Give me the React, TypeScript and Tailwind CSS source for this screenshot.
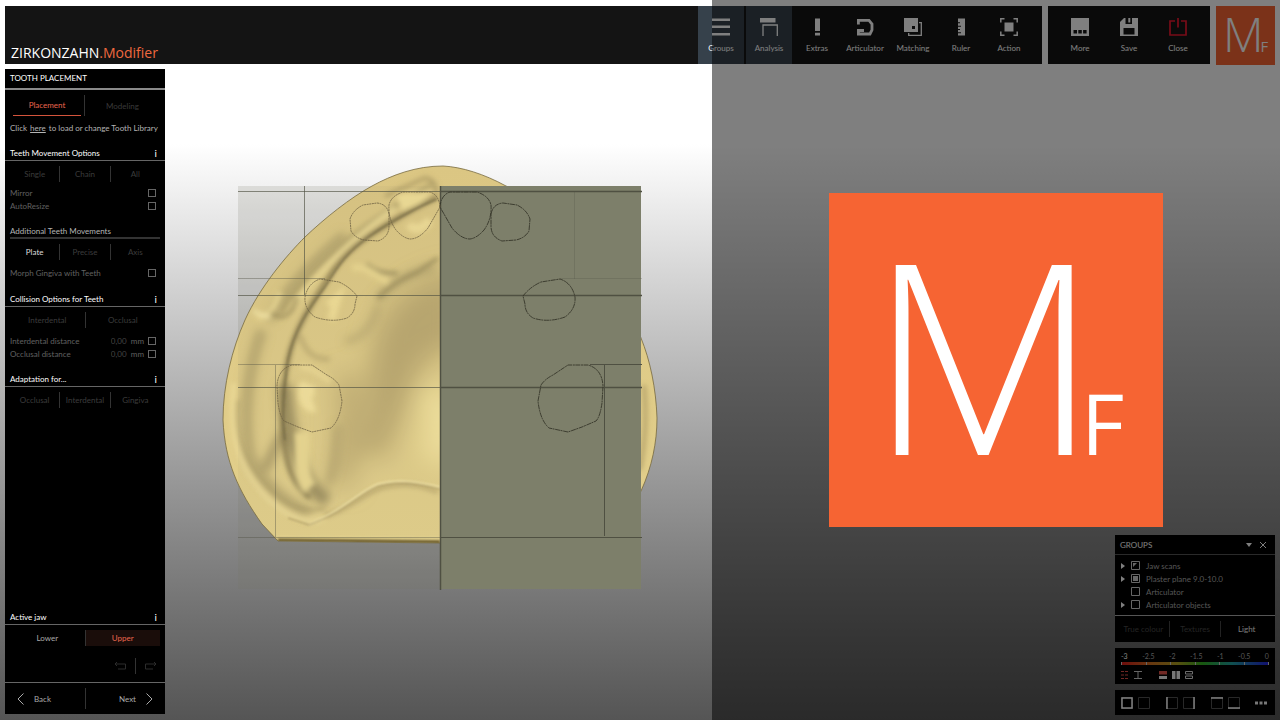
import type { ReactNode } from "react";

function BrandMark({ className }: { className: string }) {
  return (
    <svg viewBox="0 0 334 334" className={`overflow-visible ${className}`} role="img" aria-label="Modifier">
      <rect width="334" height="334" fill="#f66433" />
      <text x="40" y="262" fill="#fff" fontFamily="Open Sans" fontWeight="300" fontSize="266">
        M<tspan x="252" fontWeight="400" fontSize="84">F</tspan>
      </text>
    </svg>
  );
}

function Icon({ children, className = "size-[18px]" }: { children: ReactNode; className?: string }) {
  return (
    <svg viewBox="0 0 18 18" className={className} fill="none" stroke="none" aria-hidden="true">
      {children}
    </svg>
  );
}

const mainTools = [
  { label: "Groups", active: true, icon: <path fill="currentColor" d="M0 .5h18v2.500H0zM0 7.500h18V10H0zM0 15h18v2.500H0z" /> },
  {
    label: "Analysis",
    active: true,
    icon: (
      <>
        <path fill="currentColor" d="M0 0h15.500v4.500H0z" />
        <path stroke="currentColor" strokeWidth="1.300" d="M3 18V7h14.300v11" />
      </>
    ),
  },
  { label: "Extras", active: false, icon: <path fill="currentColor" d="M7 .5h5V13H7zM7 14.800h5v2.700H7z" /> },
  { label: "Articulator", active: false, icon: <path stroke="currentColor" strokeWidth="2.800" d="M2.400 6.500V2.400H13L16 6v6l-2 4H2.400v-3.500H8" /> },
  {
    label: "Matching",
    active: false,
    icon: (
      <>
        <path fill="currentColor" fillRule="evenodd" d="M0 0h14v14H0zM8 8v3h3V8z" />
        <path stroke="currentColor" strokeWidth="1.300" d="M15 4.700h2.300v12.600H4.700V15" />
      </>
    ),
  },
  { label: "Ruler", active: false, icon: <path fill="currentColor" d="M6 .5h7v17H6v-2.200h3v-1H6V12h2v-1H6V8.700h3v-1H6V5.300h2v-1H6z" /> },
  {
    label: "Action",
    active: false,
    icon: (
      <>
        <path fill="currentColor" d="M4.500 4.500h9v9h-9z" />
        <path stroke="currentColor" strokeWidth="1.500" d="M.8 4.500V.8h3.700M13.500.8h3.700v3.700M17.200 13.500v3.700h-3.700M4.500 17.200H.8v-3.700" />
      </>
    ),
  },
];

const fileTools = [
  { label: "More", tone: "text-white", icon: <path fill="currentColor" fillRule="evenodd" d="M0 0h18v18H0zM2.500 12v3.500H6V12zM7.300 12v3.500h3.500V12zM12.100 12v3.500h3.500V12z" /> },
  { label: "Save", tone: "text-white", icon: <path fill="currentColor" fillRule="evenodd" d="M4 0h14v18H0V4zM5.500 0v6H12V0zM3.500 10v6.500h11V10zM8.300 0h2v4.500h-2z" /> },
  { label: "Close", tone: "text-[#f01830]", icon: <path stroke="currentColor" strokeWidth="1.700" d="M6 3H1v14h16V3h-5M9 0v9.500" /> },
];

function ToolButton({ label, tone, active, icon }: { label: string; tone: string; active: boolean; icon: ReactNode }) {
  return (
    <button className={`flex w-[46px] flex-col items-center gap-1.5 pt-3 text-[8px] leading-3 ${active ? "bg-[#36414b]" : ""}`}>
      <span className={tone}><Icon>{icon}</Icon></span>
      <span className="text-white">{label}</span>
    </button>
  );
}

function Heading({ children }: { children: ReactNode }) {
  return (
    <h2 className="flex h-4 items-start justify-between border-b border-[#666] pr-2 pl-[5px] leading-4 text-white">
      {children}
      <button className="text-[10px] leading-[17px]" aria-label={`About ${children}`}>i</button>
    </h2>
  );
}

function Segments({ items, selected }: { items: string[]; selected?: string }) {
  return (
    <div className="mx-[5px] mt-[5px] flex h-4 divide-x divide-[#333]">
      {items.map((item) => (
        <button key={item} className={`flex-1 ${item === selected ? "text-[#ddd]" : "text-[#3c3c3c]"}`}>{item}</button>
      ))}
    </div>
  );
}

function CheckRow({ label, value }: { label: string; value?: string }) {
  return (
    <div className="flex h-[13px] items-center pr-[9px] pl-[5px] text-[#606060]">
      <label className="flex flex-1 items-center justify-between">
        {label}
        {value && <input type="text" defaultValue={value} className="w-5 bg-transparent text-[8px] text-[#444]" />}
      </label>
      {value && <span className="mr-1">mm</span>}
      <input type="checkbox" aria-label={label} className="size-2 appearance-none border border-[#666]" />
    </div>
  );
}

function Sidebar() {
  return (
    <aside className="mb-px flex w-40 shrink-0 flex-col bg-black">
      <h1 className="h-[21px] border-b-2 border-[#8a8a8a] pl-[5px] leading-[18px] text-white">TOOTH PLACEMENT</h1>
      <div className="mx-[5px] mt-[5px] flex h-[21px] divide-x divide-[#333]">
        <div className="flex w-1/2 px-[3px]">
          <button className="flex-1 border-b border-[#d4543c] text-[#e8664e]">Placement</button>
        </div>
        <button className="w-1/2 text-[#3a3a3a]">Modeling</button>
      </div>
      <p className="mt-1.5 mb-[11px] pl-[5px] whitespace-nowrap text-[#b4b4b4]">
        Click <a href="#library" className="mx-px underline">here</a> to load or change Tooth Library
      </p>
      <Heading>Teeth Movement Options</Heading>
      <Segments items={["Single", "Chain", "All"]} />
      <div className="mt-1 mb-[11px]">
        <CheckRow label="Mirror" />
        <CheckRow label="AutoResize" />
      </div>
      <h3 className="mx-[5px] h-4 border-b-2 border-[#333] leading-4 text-[#b4b4b4]">Additional Teeth Movements</h3>
      <Segments items={["Plate", "Precise", "Axis"]} selected="Plate" />
      <div className="mt-1.5 mb-3">
        <CheckRow label="Morph Gingiva with Teeth" />
      </div>
      <Heading>Collision Options for Teeth</Heading>
      <Segments items={["Interdental", "Occlusal"]} />
      <div className="mt-1.5 mb-[11px]">
        <CheckRow label="Interdental distance" value="0,00" />
        <CheckRow label="Occlusal distance" value="0,00" />
      </div>
      <Heading>Adaptation for...</Heading>
      <Segments items={["Occlusal", "Interdental", "Gingiva"]} />
      <div className="flex-1" />
      <Heading>Active jaw</Heading>
      <div className="mx-[5px] mt-[5px] flex h-4 divide-x divide-[#333]">
        <button className="flex-1 text-[#aaa]">Lower</button>
        <button className="flex-1 bg-[#1a0d0a] text-[#e8664e]">Upper</button>
      </div>
      <div className="mt-3 mb-2 flex h-4 items-center justify-end divide-x divide-[#333] pr-2 text-[#2c2c2c]">
        <button className="flex h-4 items-center pr-[9px]" aria-label="Undo">
          <svg viewBox="0 0 12 8" className="h-2 w-3" fill="none" stroke="currentColor" aria-hidden="true"><path d="M3 0 1 2l2 2M1 2h10.500v5H4" /></svg>
        </button>
        <button className="flex h-4 items-center pl-[9px]" aria-label="Redo">
          <svg viewBox="0 0 12 8" className="h-2 w-3" fill="none" stroke="currentColor" aria-hidden="true"><path d="m9 0 2 2-2 2M11 2H.5v5H8" /></svg>
        </button>
      </div>
      <div className="flex h-8 border-t border-[#666] py-[5px] text-[#aaa]">
        <button className="flex flex-1 items-center gap-2.5 border-r border-[#333] pl-3">
          <svg viewBox="0 0 7 12" className="h-3 w-[7px]" fill="none" stroke="currentColor" aria-hidden="true"><path d="M6.500.5 1 6l5.500 5.500" /></svg>
          Back
        </button>
        <button className="flex flex-1 items-center justify-end gap-2.5 pr-3">
          Next
          <svg viewBox="0 0 7 12" className="h-3 w-[7px]" fill="none" stroke="currentColor" aria-hidden="true"><path d="M.5.5 6 6 .5 11.500" /></svg>
        </button>
      </div>
    </aside>
  );
}

const jawOutline =
  "M443 166C416 166 392 175 372 186C350 198 325 218 305 237C286 256 260 287 245 320C232 349 223 385 223 420C225 462 238 490 262 524L278 541L440 543H602C622 520 634 505 641 491C652 467 657 442 657 418C656 388 650 360 641 338C620 270 560 206 506 186C484 174 462 167 443 166Z";

function ToothOutlines() {
  return (
    <>
      <path d="M440 207Q441 195 450 192L477 192Q489 196 491 205Q492 219 484 230Q477 238 470 239Q461 239 452 228Z" />
      <path d="M491 214Q493 204 503 203L517 205Q527 210 530 219L529 231Q525 238 516 240L502 241Q491 237 491 226Z" />
      <path d="M523 296Q530 287 541 282L560 279Q572 283 575 297Q576 309 565 317Q548 323 533 318Q525 313 525 304Z" />
      <path d="M538 401L541 385Q545 379 553 375L568 365H588Q602 369 603 386L602 403Q600 417 596 421L582 427L568 432L549 428Q540 420 538 401Z" />
    </>
  );
}

function JawView() {
  return (
    <svg viewBox="220 160 440 432" className="h-[432px] w-[440px] shrink-0" fill="none" role="img" aria-label="Jaw scan with tooth placement plate">
      <defs>
        <clipPath id="jaw"><path d={jawOutline} /></clipPath>
        <linearGradient id="plaster" x1="0" y1="0" x2="0" y2="1">
          <stop offset="0" stopColor="#dbc683" />
          <stop offset="1" stopColor="#e3d08c" />
        </linearGradient>
        <filter id="wide" x="-60%" y="-40%" width="220%" height="180%"><feGaussianBlur stdDeviation="13" /></filter>
        <filter id="soft" x="-30%" y="-30%" width="160%" height="160%"><feGaussianBlur stdDeviation="5" /></filter>
        <filter id="fine" x="-30%" y="-30%" width="160%" height="160%"><feGaussianBlur stdDeviation="2.500" /></filter>
        <filter id="edge" x="-30%" y="-30%" width="160%" height="160%"><feGaussianBlur stdDeviation=".8" /></filter>
      </defs>
      <path d="M238 186H440V589H238Z" fill="#7d7f6a" opacity=".13" />
      <path d={jawOutline} fill="url(#plaster)" />
      <g clipPath="url(#jaw)">
        <g filter="url(#wide)">
          <path d="M460 270C410 280 385 305 375 340C366 380 370 420 360 450L385 460C395 430 400 420 415 380C425 355 440 350 460 345Z" fill="#bba870" />
          <path d="M348 375C350 420 352 450 340 485" stroke="#b9a66e" strokeWidth="18" />
          <path d="M435 390C445 420 445 440 435 460" stroke="#f6e6a0" strokeWidth="30" />
        </g>
        <g filter="url(#soft)">
          <path d="M338 425C336 450 336 465 328 485" stroke="#a89866" strokeWidth="8" opacity=".6" />
          <path d="M378 305C374 325 362 338 345 342" stroke="#ab9b68" strokeWidth="6" opacity=".7" />
          <path d="M435 268C410 272 388 285 378 300" stroke="#a99a68" strokeWidth="9" opacity=".6" />
          <path d="M345 235C315 260 285 290 270 320" stroke="#b0a06a" strokeWidth="9" />
          <path d="M262 330C247 370 243 420 250 455C262 485 290 505 310 513" stroke="#b8a76f" strokeWidth="11" />
          <path d="M328 500C300 487 288 440 285 385" stroke="#9d8f60" strokeWidth="14" />
          <path d="M285 430C276 447 268 458 266 470" stroke="#a99966" strokeWidth="9" />
        </g>
        <g filter="url(#fine)">
          <path d="M437 197C418 206 390 222 370 235C345 252 336 265 325 283C310 306 294 331 288 360C282 390 281 420 285 448C288 475 300 490 310 498" stroke="#84764b" strokeWidth="4" />
          <path d="M432 184C400 202 364 224 338 248C306 276 290 294 281 313" stroke="#a99a64" strokeWidth="4" opacity=".8" />
          <path d="M395 208C360 232 320 268 294 307" stroke="#eddb96" strokeWidth="4" />
          <path d="M280 292C274 310 266 319 257 316" stroke="#efdc96" strokeWidth="6" opacity=".8" />
          <path d="M271 313L280 317C290 318 295 304 298 298" stroke="#9f905d" strokeWidth="3" />
          <path d="M253 311L270 318" stroke="#f6e8aa" strokeWidth="3" />
          <path d="M400 197L425 195Q420 203 404 207Z" fill="#efdd96" stroke="#efdd96" strokeWidth="6" />
          <path d="M385 196L425 178Q437 180 436 194" stroke="#b3a169" strokeWidth="4" />
          <path d="M409 224C413 230 420 232 430 220" stroke="#eedb96" strokeWidth="9" />
          <path d="M366 264C376 273 388 274 398 273" stroke="#a39462" strokeWidth="4" />
          <path d="M352 268C366 265 370 273 388 282" stroke="#e9d68f" strokeWidth="7" />
          <path d="M378 298C392 284 404 278 418 272L438 258" stroke="#988a59" strokeWidth="3" />
          <path d="M328 305L338 297L331 320" stroke="#efdc95" strokeWidth="8" />
          <path d="M300 335C305 353 315 360 330 359" stroke="#c6b377" strokeWidth="6" />
          <path d="M300 367C310 367 322 374 330 382" stroke="#ecd994" strokeWidth="5" />
          <path d="M308 384C304 394 308 406 314 404" stroke="#f2e09b" strokeWidth="16" />
          <path d="M302 432C304 455 298 475 310 488" stroke="#e9d791" strokeWidth="15" />
          <path d="M234 383C229 431 236 463 263 494C285 517 305 524 323 519" stroke="#eddb99" strokeWidth="4" />
          <path d="M238 400C235 430 240 456 265 484C286 506 303 514 325 508" stroke="#a69662" strokeWidth="2" />
          <path d="M438 492C420 484 400 482 380 488C360 496 347 510 325 516" stroke="#b09e66" strokeWidth="3" />
          <path d="M644 385C647 420 645 440 640 470" stroke="#b5a36b" strokeWidth="4" />
        </g>
        <g filter="url(#edge)">
          <path d="M437 199C418 207 390 222 370 236C340 257 334 274 324 288C307 311 294 331 288 360C283 392 282 420 285 440" stroke="#6d613f" strokeWidth="1.500" opacity=".8" />
          <path d="M440 487C420 482 400 478 378 484C360 491 345 509 309 525" stroke="#f4e5a6" strokeWidth="2" />
          <path d="M440 489C420 484 400 480 378 486C360 493 345 511 309 525L288 518" stroke="#a18e59" strokeWidth="1" />
          <path d="M278 540L440 542" stroke="#756432" strokeWidth="4" />
          <path d="M278 537L440 538" stroke="#ebda93" strokeWidth="1.500" />
        </g>
      </g>
      <path d={jawOutline} stroke="#776a3d" strokeWidth=".8" />
      <path d="M238 186H440V589H238Z" fill="#7d7f6a" opacity=".05" />
      <path d="M440 186H641V589H440Z" fill="#7d7f6a" />
      <g stroke="#4f5042" strokeWidth="1">
        <path opacity=".65" d="M238 191.500H440M304.500 186V295M238 295.500H440M238 387.500H440" />
        <path opacity=".4" d="M238 278.500H325M238 364.500H300M275.500 365V537M238 537.500H440" />
        <path opacity=".25" d="M574.500 192V279M560 278.500H642" />
        <path d="M590 364.500H642M604.500 365V536M440 537.500H642" />
        <path strokeWidth="1.500" d="M440.500 186V590M440 191.500H642M440 295.500H642M440 387.500H642" />
      </g>
      <g stroke="#353629" strokeWidth=".9" strokeDasharray="5 .7 2 .5"><ToothOutlines /></g>
      <g stroke="#6c6041" strokeWidth=".8" strokeDasharray="2 .6" transform="translate(880 0) scale(-1 1)"><ToothOutlines /></g>
    </svg>
  );
}

const groups = [
  { label: "Jaw scans", expandable: true, mark: <path d="M2 2h4L2 6z" fill="currentColor" /> },
  { label: "Plaster plane 9.0-10.0", expandable: true, mark: <path d="M2 2h5v5H2z" fill="currentColor" /> },
  { label: "Articulator", expandable: false, mark: null },
  { label: "Articulator objects", expandable: true, mark: null },
];

const layouts = [
  { label: "Single view", bold: "M1 1h10v10H1z", gap: "" },
  { label: "Plain view", bold: "", gap: "mr-[11px]" },
  { label: "Dock left", bold: "M1 0v12", gap: "" },
  { label: "Dock right", bold: "M11 0v12", gap: "mr-[11px]" },
  { label: "Dock top", bold: "M0 1h12", gap: "" },
  { label: "Dock bottom", bold: "M0 11h12", gap: "mr-2.5" },
];

function FloatingPanels() {
  return (
    <div className="absolute right-0 bottom-0 flex w-40 flex-col gap-1.5 text-[#aaa]">
      <section className="bg-black">
        <h2 className="flex h-5 items-center gap-1.5 border-b border-[#555] pr-2 pl-[5px] text-white">
          <span className="flex-1">GROUPS</span>
          <button aria-label="Collapse"><svg viewBox="0 0 8 8" className="size-2" aria-hidden="true"><path d="M1 2h6L4 6z" fill="currentColor" /></svg></button>
          <button aria-label="Close panel"><svg viewBox="0 0 8 8" className="size-2" stroke="currentColor" aria-hidden="true"><path d="m1 1 6 6M7 1 1 7" /></svg></button>
        </h2>
        <ul className="border-b border-[#aaa] pt-1 pb-1">
          {groups.map((g) => (
            <li key={g.label} className="flex h-[13px] items-center pl-1.5">
              {g.expandable ? (
                <button className="w-2.5 text-white" aria-label={`Expand ${g.label}`}><svg viewBox="0 0 4 6" className="h-1.5 w-1" aria-hidden="true"><path d="m0 0 4 3-4 3z" fill="currentColor" /></svg></button>
              ) : (
                <span className="w-2.5" />
              )}
              <button className="flex items-center gap-1.5">
                <svg viewBox="0 0 9 9" className="size-[9px] text-[#ccc]" aria-hidden="true"><path d="M.5.5h8v8h-8z" fill="none" stroke="currentColor" />{g.mark}</svg>
                {g.label}
              </button>
            </li>
          ))}
        </ul>
        <div className="flex h-[26px] divide-x divide-[#444] px-[3px] py-[5px]">
          <button className="flex-1 text-[#484848]">True colour</button>
          <button className="flex-1 text-[#484848]">Textures</button>
          <button className="flex-1 text-[#eee]">Light</button>
        </div>
      </section>
      <section className="h-9 bg-black px-1.5 pt-0.5">
        <div className="flex justify-between text-[7px] leading-3">
          <span className="text-white">-3</span><span>-2.5</span><span>-2</span><span>-1.5</span><span>-1</span><span>-0.5</span><span>0</span>
        </div>
        <div className="flex h-[3px] justify-between bg-[linear-gradient(90deg,#e01818,#d07020_20%,#b0a020_38%,#30b020_55%,#20a0a0_75%,#2020e0)]">
          {["a", "b", "c", "d", "e", "f", "g"].map((k) => <span key={k} className="w-px bg-[#ccc]" />)}
        </div>
        <div className="mt-1.5 flex items-center gap-[5px]">
          <button aria-label="Lines"><svg viewBox="0 0 8 8" className="size-2" stroke="#e05048" strokeDasharray="3 1" aria-hidden="true"><path d="M0 .5h8M0 4h8M0 7.500h8" /></svg></button>
          <button className="mr-3" aria-label="Range"><svg viewBox="0 0 8 8" className="size-2" stroke="#ccc" aria-hidden="true"><path d="M0 .5h8M4 0v8M0 7.500h8" /></svg></button>
          <button aria-label="Stacked"><svg viewBox="0 0 8 8" className="size-2" aria-hidden="true"><path d="M0 0h8v3.500H0z" fill="#e05048" /><path d="M0 5h8v3H0z" fill="#eee" /></svg></button>
          <button aria-label="Side by side"><svg viewBox="0 0 8 8" className="size-2" aria-hidden="true"><path d="M0 0h3.500v8H0zM4.500 0H8v8H4.500z" fill="#eee" /></svg></button>
          <button aria-label="Split"><svg viewBox="0 0 8 8" className="size-2" fill="none" stroke="#ddd" aria-hidden="true"><path d="M.5.5h7v2.500h-7zM.5 5h7v2.500h-7z" /></svg></button>
        </div>
      </section>
      <section className="flex h-[25px] items-center gap-[5px] bg-black pl-1.5">
        {layouts.map((l) => (
          <button key={l.label} aria-label={l.label} className={l.gap}>
            <svg viewBox="0 0 12 12" className="size-3" fill="none" aria-hidden="true">
              <path d="M.5.5h11v11H.5z" stroke="#505050" />
              <path d={l.bold} stroke="#fff" strokeWidth="1.500" />
            </svg>
          </button>
        ))}
        <button aria-label="More layouts"><svg viewBox="0 0 12 4" className="h-1 w-3" fill="#eee" aria-hidden="true"><path d="M0 .5h3v3H0zM4.500.5h3v3h-3zM9 .5h3v3H9z" /></svg></button>
      </section>
    </div>
  );
}

export default function App() {
  return (
    <div className="relative flex min-h-screen flex-col gap-[5px] bg-linear-to-b from-white from-20% to-[#555] px-[5px] pt-1.5 pb-[5px] font-[Lato,sans-serif] text-[8px] leading-3">
      <header className="flex h-[58px] gap-1.5">
        <div className="flex flex-1 justify-between bg-[#141414] pr-2.5">
          <div className="self-end pb-[3px] pl-1.5 font-['Open_Sans',sans-serif] text-sm leading-4 text-white">ZIRKONZAHN<span className="text-[#f0693f]">.Modifier</span></div>
          <nav className="flex gap-0.5" aria-label="Tools">
            {mainTools.map((t) => <ToolButton key={t.label} tone="text-white" {...t} />)}
          </nav>
        </div>
        <nav className="flex gap-[3px] bg-[#141414] px-[9px]" aria-label="File">
          {fileTools.map((t) => <ToolButton key={t.label} active={false} {...t} />)}
        </nav>
        <BrandMark className="size-[59px] shrink-0" />
      </header>
      <div className="flex flex-1">
        <Sidebar />
        <main className="relative flex flex-1 items-start pt-[91px] pl-[55px]">
          <JawView />
          <div className="z-20 mt-[33px] ml-[169px] shrink-0"><BrandMark className="size-[334px]" /></div>
          <FloatingPanels />
        </main>
      </div>
      <div className="pointer-events-none absolute inset-y-0 right-0 left-[55.625%] z-10 bg-black/50" />
    </div>
  );
}
